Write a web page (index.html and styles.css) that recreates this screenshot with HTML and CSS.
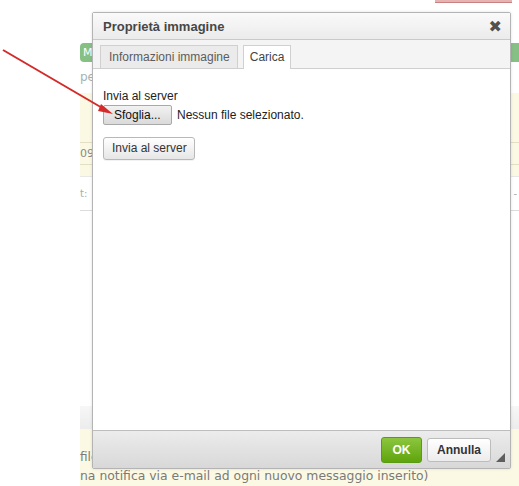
FILE: index.html
```html
<!DOCTYPE html>
<html lang="it">
<head>
<meta charset="utf-8">
<title>Proprietà immagine</title>
<link rel="stylesheet" href="styles.css">
</head>
<body>
<div class="page">
  <div class="topbar"><div class="redbtn"></div></div>
  <div class="badges"><span class="badge">M</span><span class="badge badge-r"></span></div>
  <div class="textrow">pe</div>
  <div class="yellow">
    <div class="yrow yrow-a"></div>
    <div class="yrow yrow-b">09/</div>
    <div class="yrow yrow-c"></div>
  </div>
  <div class="whiterow"><span>t:</span><span class="dash">-</span></div>
  <div class="spacer"></div>
  <div class="grayband"></div>
  <div class="footnote">
    <div class="fn1">filc</div>
    <div class="fn2">na notifica via e-mail ad ogni nuovo messaggio inserito)</div>
  </div>
</div>

<div class="dialog">
  <div class="dlg-title">
    <span>Proprietà immagine</span>
    <span class="close">&#x2716;</span>
  </div>
  <div class="tabs">
    <div class="tab">Informazioni immagine</div>
    <div class="tab tab-active">Carica</div>
  </div>
  <div class="dlg-body">
    <div class="lbl">Invia al server</div>
    <div class="filerow">
      <span class="btn-file">Sfoglia...</span>
      <span class="nofile">Nessun file selezionato.</span>
    </div>
    <div class="btn-send">Invia al server</div>
  </div>
  <div class="dlg-footer">
    <span class="btn-ok">OK</span>
    <span class="btn-cancel">Annulla</span>
    <span class="resize"></span>
  </div>
</div>

<svg class="arrow" width="130" height="130" viewBox="0 0 130 130">
  <line x1="3" y1="50" x2="104" y2="109" stroke="#d42a2a" stroke-width="2"/>
  <polygon points="113,114 101,104 98,111" fill="#d42a2a"/>
</svg>
</body>
</html>
```

FILE: styles.css
```css
html, body {
  margin: 0;
  padding: 0;
  background: #fff;
}
body {
  width: 519px;
  height: 486px;
  overflow: hidden;
  position: relative;
  font-family: "Liberation Sans", Arial, sans-serif;
}

/* background page */
.page {
  margin-left: 80px;
  height: 486px;
  display: flex;
  flex-direction: column;
  font-family: "DejaVu Sans", Verdana, sans-serif;
  font-size: 11px;
  color: #888;
  overflow: hidden;
}
.page > * {
  flex-shrink: 0;
}
.topbar {
  height: 43px;
  display: flex;
  justify-content: flex-end;
  padding-right: 7px;
}
.redbtn {
  width: 77px;
  height: 2px;
  background: #e6b3b3;
  border-bottom: 1px solid #c98080;
}
.badges {
  height: 19px;
  display: flex;
  justify-content: space-between;
}
.badge {
  width: 30px;
  border-radius: 4px;
  background: #86c084;
  color: #fff;
  font-size: 11px;
  line-height: 19px;
  padding-left: 3px;
}
.badge-r {
  width: 20px;
  margin-right: -12px;
}
.textrow {
  height: 18px;
  margin-top: 6px;
  margin-bottom: 7px;
  line-height: 18px;
  color: #a4b4b4;
  font-size: 12px;
}
.yellow {
  background: #fbf9e4;
  display: flex;
  flex-direction: column;
}
.yrow-a {
  height: 49px;
  border-bottom: 1px solid #e2dfc4;
}
.yrow-b {
  height: 21px;
  line-height: 22px;
  border-bottom: 1px solid #e2dfc4;
  color: #8a8a8a;
}
.yrow-c {
  height: 11px;
  border-bottom: 1px solid #e8e8e8;
}
.whiterow {
  height: 33px;
  border-bottom: 1px solid #dcdcdc;
  display: flex;
  justify-content: space-between;
  align-items: center;
  color: #aaa;
  font-size: 10px;
}
.dash { padding-right: 2px; }
.spacer {
  height: 195px;
}
.grayband {
  height: 23px;
  background: linear-gradient(#f7f7f7, #ececec);
}
.footnote {
  flex: 1 0 auto;
  background: #fbf9e4;
  padding-top: 19px;
  color: #7a7a7a;
}
.fn1 {
  height: 18px;
  line-height: 18px;
  font-size: 12px;
}
.fn2 {
  line-height: 20px;
  font-size: 12.4px;
  white-space: nowrap;
}

/* dialog */
.dialog {
  position: absolute;
  left: 92px;
  top: 12px;
  width: 417px;
  height: 455px;
  border: 1px solid #b4b4b4;
  background: #fff;
  display: flex;
  flex-direction: column;
  box-shadow: 0 0 3px rgba(0,0,0,0.12);
  border-radius: 2px;
}
.dlg-title {
  height: 26px;
  border-bottom: 1px solid #c9c9c9;
  background: linear-gradient(#fafafa, #ebebeb);
  display: flex;
  align-items: center;
  justify-content: space-between;
  padding: 0 8px 0 10px;
  font-weight: bold;
  font-size: 13px;
  color: #474747;
}
.close {
  font-size: 16px;
  color: #505050;
  font-family: "DejaVu Sans", sans-serif;
}
.tabs {
  height: 23px;
  padding: 5px 0 0 7px;
  background: #f4f4f4;
  border-bottom: 1px solid #cfcfcf;
  display: flex;
  gap: 5px;
  align-items: flex-end;
}
.tab {
  height: 22px;
  line-height: 22px;
  padding: 0 7px 0 8px;
  border: 1px solid #d0d0d0;
  border-bottom: none;
  background: #ebebeb;
  color: #5c5c5c;
  font-size: 12px;
}
.tab-active {
  background: #fff;
  height: 23px;
  margin-bottom: -1px;
  color: #444;
  padding: 0 6px 0 6px;
}
.dlg-body {
  flex: 1;
  padding: 20px 10px 0 10px;
  font-size: 12px;
  color: #222;
}
.lbl {
  line-height: 15px;
  height: 16px;
}
.filerow {
  display: flex;
  align-items: center;
  gap: 5px;
}
.btn-file {
  display: inline-block;
  width: 57px;
  height: 18px;
  line-height: 18px;
  padding-left: 10px;
  border: 1px solid #a9a9a9;
  border-radius: 2px;
  background: linear-gradient(#f2f2f2, #dadada);
  color: #111;
}
.nofile { color: #222; }
.btn-send {
  display: inline-block;
  margin-top: 12px;
  height: 21px;
  line-height: 21px;
  padding: 0 7px 0 8px;
  border: 1px solid #b8b8b8;
  border-radius: 3px;
  background: linear-gradient(#ffffff, #e6e6e6);
  color: #333;
  box-shadow: 0 1px 0 rgba(0,0,0,0.05);
}
.dlg-footer {
  height: 37px;
  border-top: 1px solid #bdbdbd;
  background: linear-gradient(#ececec, #d8d8d8);
  display: flex;
  justify-content: flex-end;
  align-items: center;
  gap: 5px;
  padding-right: 19px;
  position: relative;
  font-size: 12px;
  font-weight: bold;
}
.btn-ok {
  width: 39px;
  height: 24px;
  line-height: 24px;
  text-align: center;
  color: #fff;
  background: linear-gradient(#8cc63f, #5fa40c);
  border: 1px solid #5a9a14;
  border-radius: 3px;
}
.btn-cancel {
  width: 62px;
  height: 22px;
  line-height: 22px;
  text-align: center;
  color: #333;
  background: linear-gradient(#ffffff, #ececec);
  border: 1px solid #bcbcbc;
  border-radius: 3px;
}
.resize {
  position: absolute;
  right: 5px;
  bottom: 6px;
  width: 0;
  height: 0;
  border-left: 9px solid transparent;
  border-bottom: 9px solid #5e5e5e;
}
.arrow {
  position: absolute;
  left: 0;
  top: 0;
}
```
